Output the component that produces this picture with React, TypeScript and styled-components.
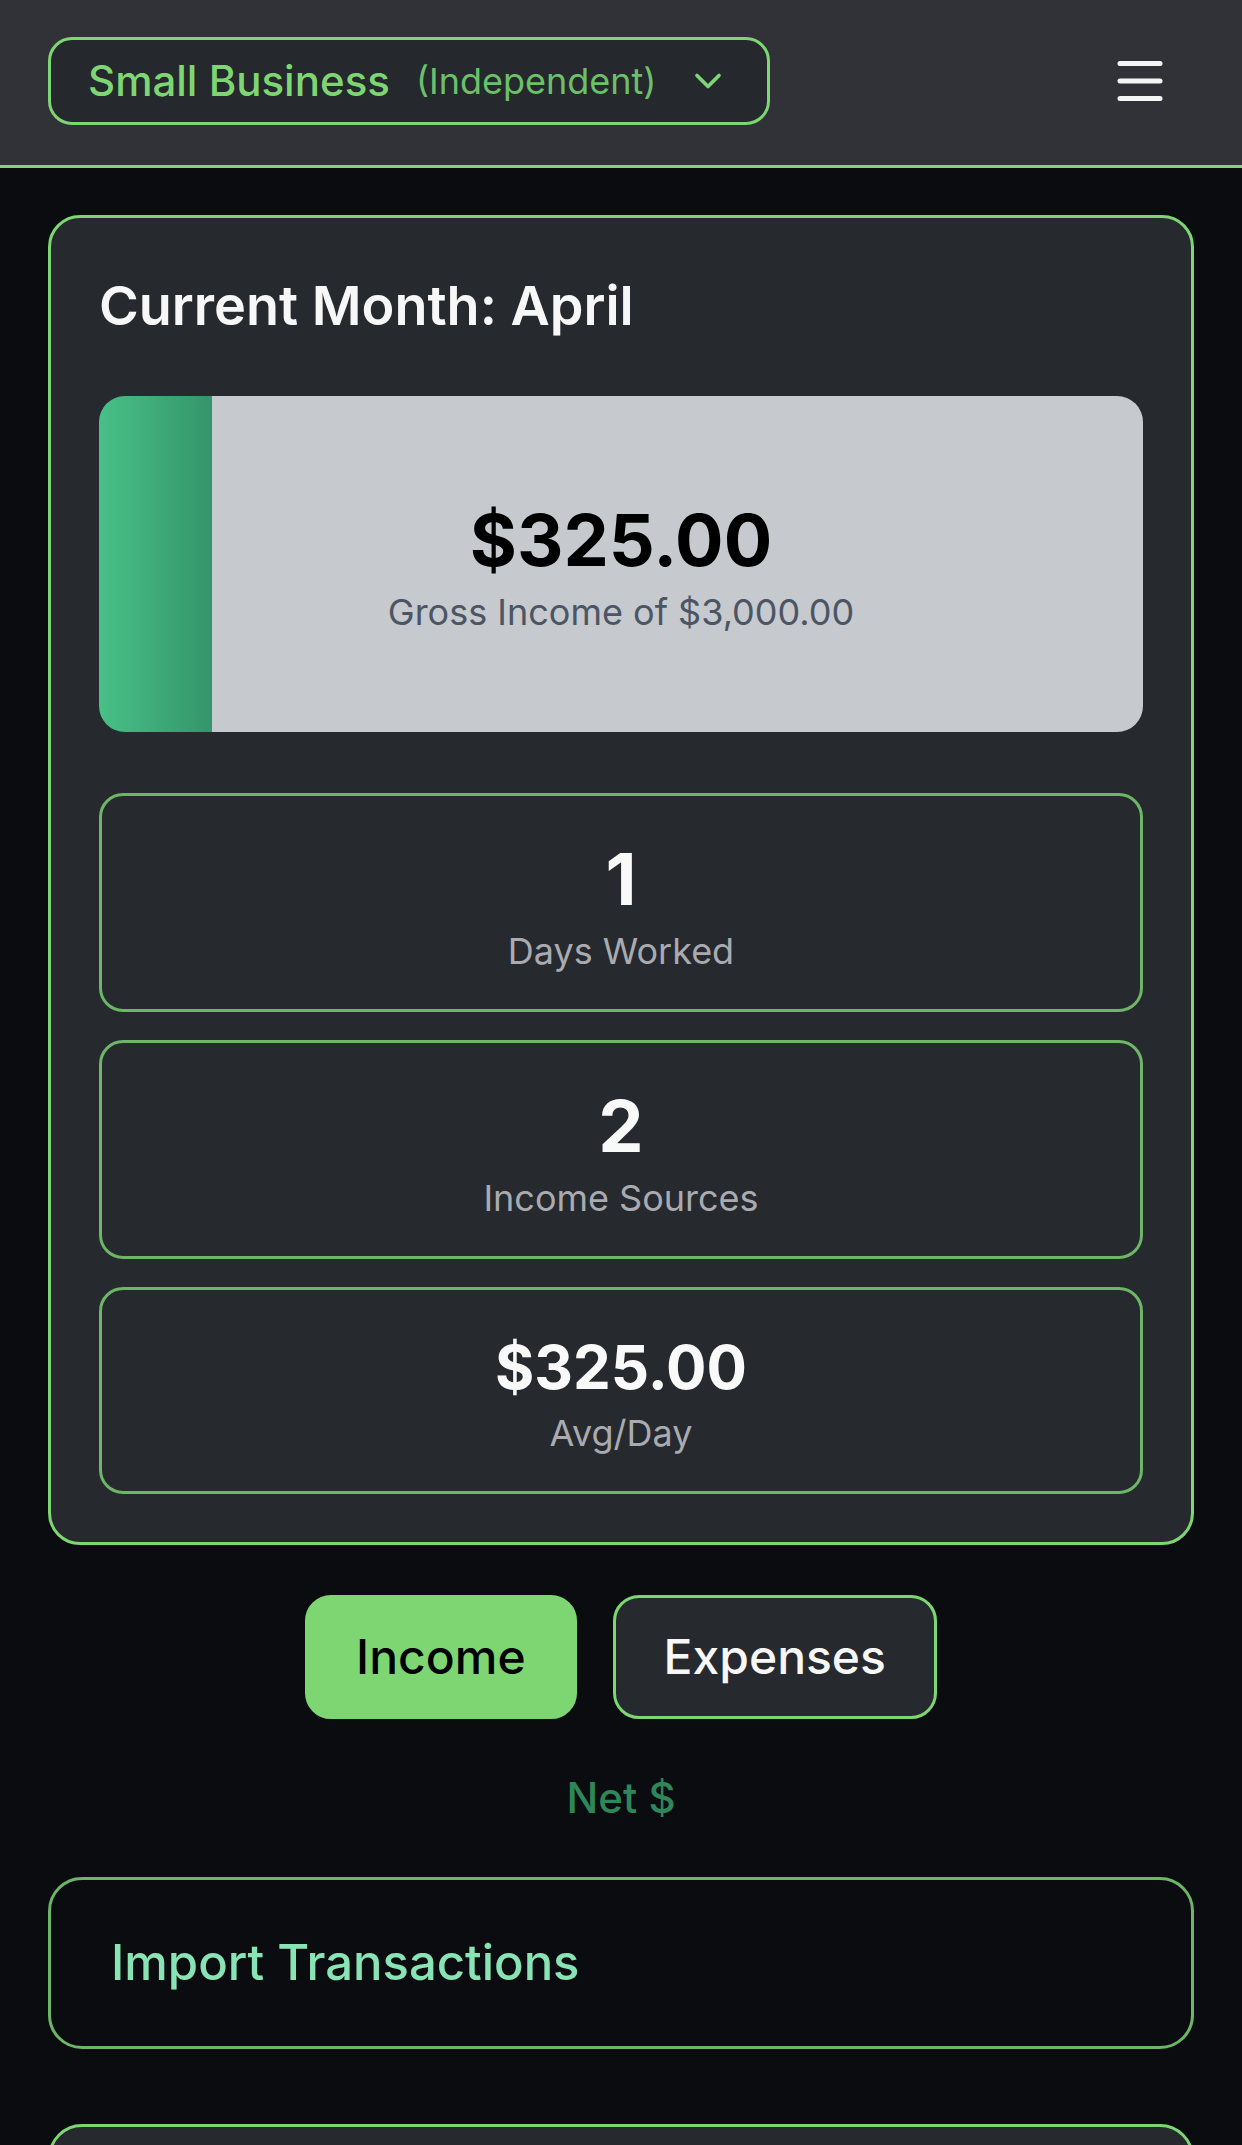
import React from "react";
import styled, { createGlobalStyle } from "styled-components";
import { ChevronDown, Menu } from "lucide-react";

const GREEN = "#7ed672";
const GREEN_SOFT = "#6db567";
const CARD = "#26292e";

const GlobalStyle = createGlobalStyle`
  html, body {
    margin: 0;
    padding: 0;
    background: #0a0c0f;
    font-family: Inter, "Noto Sans", "Liberation Sans", sans-serif;
    -webkit-font-smoothing: antialiased;
  }
  * { box-sizing: border-box; }
`;

const Page = styled.div`
  min-height: 100vh;
  background: #0a0c0f;
`;

const Header = styled.header`
  display: flex;
  align-items: center;
  justify-content: space-between;
  height: 168px;
  padding: 0 48px 3px;
  background: #303237;
  border-bottom: 3px solid ${GREEN};
`;

const BusinessSelect = styled.button`
  display: inline-flex;
  align-items: center;
  height: 88px;
  padding: 0 37px;
  border: 3px solid ${GREEN};
  border-radius: 24px;
  background: #25282c;
  color: ${GREEN};
  font-family: inherit;
  cursor: pointer;
`;

const SelectName = styled.span`
  font-size: 42px;
  line-height: 60px;
  font-weight: 500;
  color: ${GREEN};
`;

const SelectTag = styled.span`
  margin-left: 26px;
  font-size: 36px;
  line-height: 48px;
  font-weight: 400;
  color: #6cc06a;
`;

const SelectChevron = styled(ChevronDown)`
  margin-left: 30px;
  color: ${GREEN};
`;

const MenuButton = styled.button`
  display: flex;
  padding: 24px;
  border: none;
  background: transparent;
  color: #f5f5f5;
  cursor: pointer;
`;

const Main = styled.main`
  display: flex;
  flex-direction: column;
  padding: 47px 48px 0;
`;

const SummaryCard = styled.section`
  display: flex;
  flex-direction: column;
  padding: 46px 48px 48px;
  border: 3px solid ${GREEN};
  border-radius: 32px;
  background: ${CARD};
`;

const CardTitle = styled.h2`
  margin: 0 0 48px;
  font-size: 54px;
  line-height: 84px;
  font-weight: 600;
  color: #f7f7f7;
`;

const ProgressPanel = styled.div<{ $pct: number }>`
  display: flex;
  flex-direction: column;
  align-items: center;
  justify-content: center;
  height: 336px;
  border-radius: 26px;
  background-color: #c6c9ce;
  background-image: linear-gradient(90deg, #48c087, #34956a);
  background-repeat: no-repeat;
  background-size: ${(p) => p.$pct}% 100%;
`;

const ProgressValue = styled.div`
  font-size: 72px;
  line-height: 96px;
  font-weight: 700;
  color: #000;
`;

const ProgressCaption = styled.div`
  font-size: 36px;
  line-height: 48px;
  color: #4b5563;
`;

const StatList = styled.div`
  display: flex;
  flex-direction: column;
  gap: 28px;
  margin-top: 61px;
`;

const StatBox = styled.div`
  display: flex;
  flex-direction: column;
  align-items: center;
  padding: 35px 0 34px;
  border: 3px solid ${GREEN_SOFT};
  border-radius: 24px;
  background: ${CARD};
`;

const StatValue = styled.div<{ $small?: boolean }>`
  font-size: ${(p) => (p.$small ? 60 : 72)}px;
  line-height: ${(p) => (p.$small ? 84 : 96)}px;
  font-weight: 700;
  color: #f9f9f9;
`;

const StatLabel = styled.div`
  font-size: 36px;
  line-height: 48px;
  color: #a9abb0;
`;

const ToggleRow = styled.div`
  display: flex;
  justify-content: center;
  gap: 36px;
  margin-top: 50px;
`;

const ToggleButton = styled.button<{ $active?: boolean }>`
  padding: 23px 48px;
  border: 3px solid ${GREEN};
  border-radius: 26px;
  background: ${(p) => (p.$active ? GREEN : CARD)};
  color: ${(p) => (p.$active ? "#000" : "#f7f7f7")};
  font-family: inherit;
  font-size: 48px;
  line-height: 72px;
  font-weight: 500;
  cursor: pointer;
`;

const NetLabel = styled.div`
  margin-top: 49px;
  text-align: center;
  font-size: 42px;
  line-height: 60px;
  font-weight: 500;
  color: #2e8659;
`;

const ImportCard = styled.div`
  margin-top: 49px;
  padding: 47px 60px;
  border: 3px solid ${GREEN_SOFT};
  border-radius: 34px;
  background: #0a0c0f;
`;

const ImportTitle = styled.h3`
  margin: 0;
  font-size: 49px;
  line-height: 72px;
  font-weight: 500;
  color: #88e3b5;
`;

const NextCard = styled.section`
  margin-top: 75px;
  height: 320px;
  border: 3px solid ${GREEN};
  border-radius: 34px;
  background: ${CARD};
`;

const stats = [
  { value: "1", label: "Days Worked" },
  { value: "2", label: "Income Sources" },
  { value: "$325.00", label: "Avg/Day", small: true },
];

export default function App() {
  const earned = 325;
  const gross = 3000;
  const pct = (earned / gross) * 100;
  return (
    <Page>
      <GlobalStyle />
      <Header>
        <BusinessSelect>
          <SelectName>Small Business</SelectName>
          <SelectTag>(Independent)</SelectTag>
          <SelectChevron size={44} strokeWidth={2} />
        </BusinessSelect>
        <MenuButton aria-label="Menu">
          <Menu size={60} strokeWidth={2} />
        </MenuButton>
      </Header>
      <Main>
        <SummaryCard>
          <CardTitle>Current Month: April</CardTitle>
          <ProgressPanel $pct={pct}>
            <ProgressValue>$325.00</ProgressValue>
            <ProgressCaption>Gross Income of $3,000.00</ProgressCaption>
          </ProgressPanel>
          <StatList>
            {stats.map((s) => (
              <StatBox key={s.label}>
                <StatValue $small={s.small}>{s.value}</StatValue>
                <StatLabel>{s.label}</StatLabel>
              </StatBox>
            ))}
          </StatList>
        </SummaryCard>
        <ToggleRow>
          <ToggleButton $active>Income</ToggleButton>
          <ToggleButton>Expenses</ToggleButton>
        </ToggleRow>
        <NetLabel>Net $</NetLabel>
        <ImportCard>
          <ImportTitle>Import Transactions</ImportTitle>
        </ImportCard>
        <NextCard />
      </Main>
    </Page>
  );
}
